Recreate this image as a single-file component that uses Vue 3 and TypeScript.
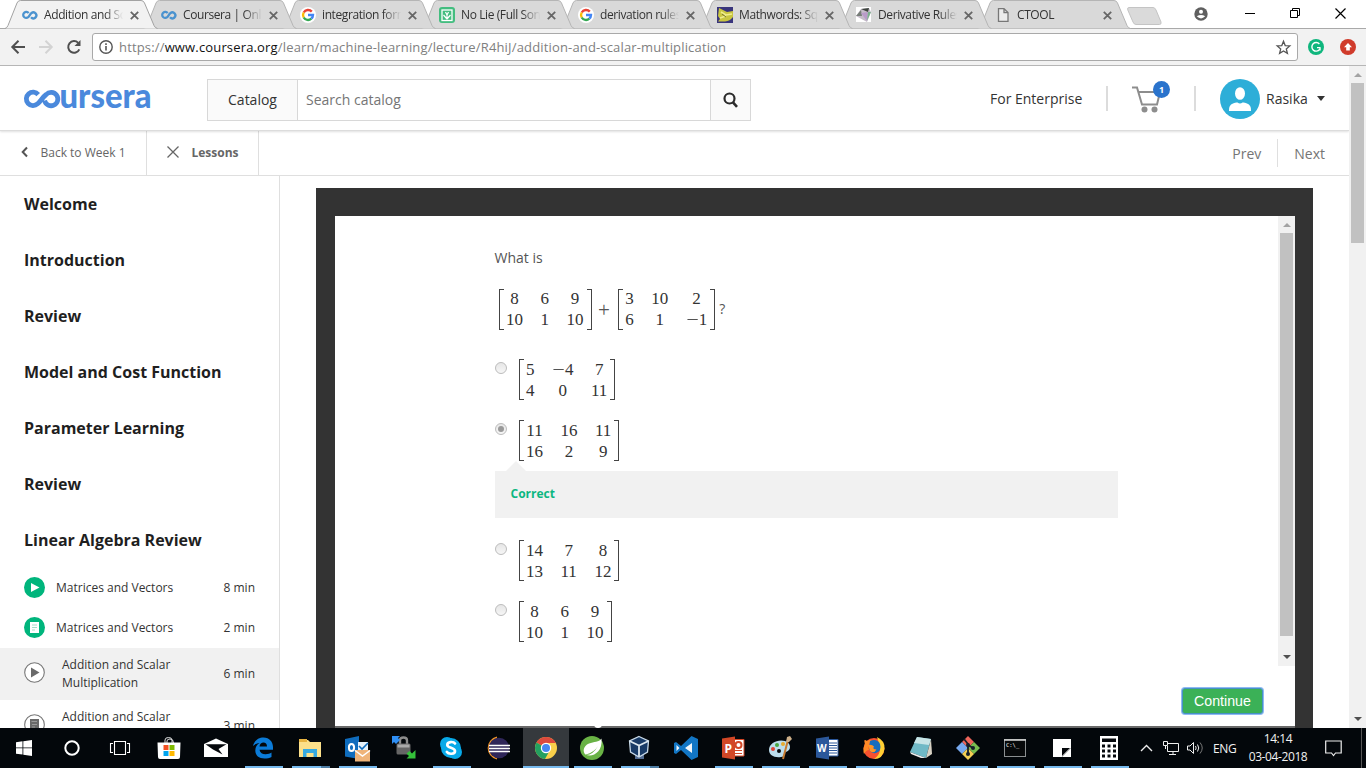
<script setup lang="ts">
interface Tab { title: string; icon: string }
interface Option { rows: string[][]; checked?: boolean; correct?: boolean }
interface Lesson { title: string; time: string; icon: string; active?: boolean; tall?: boolean }
interface App { name: string; state?: string }

const tabs: Tab[] = [
  { title: 'Addition and Scalar', icon: 'coursera' },
  { title: 'Coursera | Online', icon: 'coursera' },
  { title: 'integration formula', icon: 'google' },
  { title: 'No Lie (Full Song)', icon: 'saavn' },
  { title: 'derivation rules', icon: 'google' },
  { title: 'Mathwords: Square', icon: 'mathwords' },
  { title: 'Derivative Rules', icon: 'derivative' },
  { title: 'CTOOL', icon: 'file' },
]

const sections: string[] = [
  'Welcome', 'Introduction', 'Review', 'Model and Cost Function',
  'Parameter Learning', 'Review', 'Linear Algebra Review',
]

const lessons: Lesson[] = [
  { title: 'Matrices and Vectors', time: '8 min', icon: 'play' },
  { title: 'Matrices and Vectors', time: '2 min', icon: 'doc' },
  { title: 'Addition and Scalar Multiplication', time: '6 min', icon: 'play-outline', active: true, tall: true },
  { title: 'Addition and Scalar Multiplication', time: '3 min', icon: 'doc-outline', tall: true },
]

const left: string[][] = [['8', '6', '9'], ['10', '1', '10']]
const right: string[][] = [['3', '10', '2'], ['6', '1', '−1']]

const options: Option[] = [
  { rows: [['5', '−4', '7'], ['4', '0', '11']] },
  { rows: [['11', '16', '11'], ['16', '2', '9']], checked: true, correct: true },
  { rows: [['14', '7', '8'], ['13', '11', '12']] },
  { rows: [['8', '6', '9'], ['10', '1', '10']] },
]

const apps: App[] = [
  { name: 'store' }, { name: 'mail' }, { name: 'edge', state: 'open' }, { name: 'explorer', state: 'multi' },
  { name: 'outlook', state: 'open' }, { name: 'lock' }, { name: 'skype', state: 'open' }, { name: 'eclipse' },
  { name: 'chrome', state: 'open focus' }, { name: 'spring', state: 'open' }, { name: 'vbox', state: 'multi' },
  { name: 'vscode' }, { name: 'powerpoint', state: 'open' }, { name: 'paint', state: 'open' },
  { name: 'word', state: 'open' }, { name: 'firefox', state: 'open' }, { name: 'notepad', state: 'open' },
  { name: 'git', state: 'open' }, { name: 'cmd', state: 'open' }, { name: 'notes', state: 'open' },
  { name: 'calc', state: 'open' },
]
</script>

<template>
  <div class="screen">
    <div class="strip">
      <div v-for="(t, i) in tabs" :key="i" class="tab" :class="{ on: i === 0 }" :style="{ zIndex: 10 - i }">
        <svg class="shape" width="153" height="29" viewBox="0 0 153 29">
          <path d="M0 28.5 Q2 28 3 25.5 L12 3 Q13 .5 15.500 .5 H136 Q138.500 .5 139.500 3 L149 25.500 Q150 28 152.500 28.500" />
        </svg>
        <svg class="fav" width="16" height="16" viewBox="0 0 16 16">
          <g v-if="t.icon === 'coursera'" fill="none" stroke="#4b93cf" stroke-width="2.300">
            <path d="M6.600 6.100 A3 3 0 1 0 6.200 10.200 C7.500 9 8 7 9.500 6 A3 3 0 1 1 9 10.300" />
          </g>
          <g v-else-if="t.icon === 'google'">
            <circle cx="8" cy="8" r="8" fill="#fff" />
            <g fill="none" stroke-width="2.400">
              <path d="M11.800 4.600 A5 5 0 0 0 3.700 5.500" stroke="#ea4335" />
              <path d="M3.700 5.500 A5 5 0 0 0 3.700 10.500" stroke="#fbbc05" />
              <path d="M3.700 10.500 A5 5 0 0 0 11.300 11.700" stroke="#34a853" />
              <path d="M11.300 11.700 A5 5 0 0 0 13 8 H8" stroke="#4285f4" />
            </g>
          </g>
          <g v-else-if="t.icon === 'saavn'">
            <rect width="16" height="16" rx="3" fill="#43bd7f" />
            <rect x="3" y="3" width="10" height="10.500" fill="none" stroke="#fff" stroke-width="1.300" />
            <path d="M8 12 V8 M8 12 L4.500 8 M8 12 L11.500 8 M6.500 5 L8 8 L9.500 5" fill="none" stroke="#fff" stroke-width="1.200" />
          </g>
          <g v-else-if="t.icon === 'mathwords'">
            <rect width="16" height="16" fill="#39357c" />
            <path d="M2 1 L6 3 L10 5 L16 4 V10 Q13 14 8 14.500 L1 14.500 L3 12 L1 9Z" fill="#c9c640" />
            <path d="M4 5 L9 8 L15 7 M3 11 L9 9" stroke="#f0ee8e" stroke-width="1.500" fill="none" />
            <path d="M5 7 L9 10" stroke="#77752b" />
          </g>
          <g v-else-if="t.icon === 'derivative'">
            <rect width="15" height="15" fill="#fff" />
            <path d="M0 9 L5 2 L13 1 L15 5 L11 15Z" fill="#c5bcc9" />
            <path d="M5 2 L13 1 L12 5 Z" fill="#3e453f" />
            <path d="M0 9 L5 3 L6 9Z" fill="#777e78" />
            <path d="M5 6 L12 5 L11 14Z" fill="#b99bc9" />
            <path d="M12 5 L15 5 L11 14Z" fill="#79b28b" />
          </g>
          <g v-else fill="#ececec" stroke="#777" stroke-width="1.300">
            <path d="M3.500 1.600 H9 L13 5.600 V14.400 H3.500Z M9 1.600 V5.600 H13" />
          </g>
        </svg>
        <span class="title" :class="{ full: t.title === 'CTOOL' }">{{ t.title }}</span>
        <svg class="x" width="9" height="9" viewBox="0 0 9 9"><path d="M.8 .8 L8.200 8.200 M8.200 .8 L.8 8.200" /></svg>
      </div>
      <svg class="newtab" width="35" height="18" viewBox="0 0 35 18">
        <path d="M2 .5 H26 Q28 .5 29 3 L34 15 Q34.500 17.500 32.500 17.500 H9 Q7 17.500 6 15 L.8 3 Q0 .5 2 .5Z" fill="#dadada" stroke="#c4c4c4" />
      </svg>
      <div class="winbtns">
        <svg width="14" height="14" viewBox="0 0 14 14">
          <circle cx="7" cy="7" r="6.700" fill="#5f5f5f" /><circle cx="7" cy="4.700" r="2" fill="#fff" />
          <path d="M2.800 9.300 Q7 6.600 11.200 9.300 Q7 13.500 2.800 9.300" fill="#fff" />
        </svg>
        <svg width="11" height="11" viewBox="0 0 11 11"><path d="M0 5.500 H10" stroke="#000" /></svg>
        <svg width="11" height="11" viewBox="0 0 11 11" fill="none" stroke="#000"><path d="M.5 2.500 H7.500 V9.500 H.5Z M2.500 2.500 V.5 H9.500 V7.500 H7.500" /></svg>
        <svg width="11" height="11" viewBox="0 0 11 11"><path d="M.5 .5 L10.500 10.500 M10.500 .5 L.5 10.500" stroke="#000" stroke-width="1.200" /></svg>
      </div>
    </div>

    <div class="toolbar">
      <svg class="nav" width="16" height="16" viewBox="0 0 16 16"><path d="M15 8 H2.500 M8.500 1.800 L2.300 8 L8.500 14.200" stroke="#4f4f4f" /></svg>
      <svg class="nav" width="16" height="16" viewBox="0 0 16 16"><path d="M1 8 H13.500 M7.500 1.800 L13.700 8 L7.500 14.200" stroke="#d3d3d3" /></svg>
      <svg class="nav" width="16" height="16" viewBox="0 0 16 16"><path d="M13.300 10.300 A5.800 5.800 0 1 1 12.200 3.900" stroke="#4f4f4f" /><path d="M14.500 1 V7 H8.500Z" fill="#4f4f4f" stroke="none" /></svg>
      <div class="omni">
        <svg width="14" height="14" viewBox="0 0 14 14"><circle cx="7" cy="7" r="6.200" fill="none" stroke="#555" stroke-width="1.400" /><path d="M7 6 V10.500 M7 3.300 V5" stroke="#555" stroke-width="1.600" /></svg>
        <span class="url">https://<b>www.coursera.org</b>/learn/machine-learning/lecture/R4hiJ/addition-and-scalar-multiplication</span>
        <svg class="star" width="15" height="15" viewBox="0 0 15 15"><path d="M7.500 1.300 L9.200 5.600 L13.800 5.900 L10.300 8.900 L11.400 13.400 L7.500 10.900 L3.600 13.400 L4.700 8.900 L1.200 5.900 L5.800 5.600Z" fill="none" stroke="#555" stroke-width="1.300" /></svg>
      </div>
      <svg class="ext" width="16" height="16" viewBox="0 0 16 16"><circle cx="8" cy="8" r="8" fill="#0fb67d" /><path d="M11.400 5 A4.300 4.300 0 1 0 11.600 10.500 M12 8.500 V11.500 M12.500 8.600 H9" fill="none" stroke="#fff" stroke-width="1.400" /></svg>
      <svg class="ext" width="16" height="16" viewBox="0 0 16 16"><circle cx="8" cy="8" r="8" fill="#d03b2b" /><path d="M8 4 L12 8.300 H9.800 V11.500 H6.200 V8.300 H4Z" fill="#fff" /></svg>
    </div>

    <div class="view">
      <div class="page">
        <header class="head">
          <svg class="logo" width="129" height="32" viewBox="0 0 129 32" role="img" aria-label="coursera">
            <path d="M15.200 11.600 A6.700 6.700 0 1 0 14.600 20.800 C18 17.800 19.200 14.500 23.200 11.500 A6.700 6.700 0 1 1 21.600 17.500" fill="none" stroke="#4a89dc" stroke-width="4.800" />
            <text x="36.500" y="25.300" textLength="92" lengthAdjust="spacingAndGlyphs" class="logotext">ursera</text>
          </svg>
          <div class="search">
            <span class="catalog">Catalog</span>
            <span class="field">Search catalog</span>
            <span class="go"><svg width="15" height="16" viewBox="0 0 15 16"><circle cx="6.500" cy="6.500" r="5" fill="none" stroke="#2b2b2b" stroke-width="2.200" /><path d="M10 10.300 L14 14.800" stroke="#2b2b2b" stroke-width="2.600" /></svg></span>
          </div>
          <span class="ent">For Enterprise</span>
          <i class="bar"></i>
          <div class="cart">
            <svg width="30" height="27" viewBox="0 0 30 27">
              <path d="M0 1.500 H5 L10 18.500 H25 L28 6 H7" fill="none" stroke="#8d8d8d" stroke-width="2" />
              <circle cx="12.500" cy="23.500" r="3" fill="#8d8d8d" /><circle cx="22.500" cy="23.500" r="3" fill="#8d8d8d" />
            </svg>
            <span class="badge">1</span>
          </div>
          <i class="bar second"></i>
          <svg class="avatar" width="40" height="40" viewBox="0 0 40 40">
            <circle cx="20" cy="20" r="20" fill="#2daed8" /><ellipse cx="20" cy="14.500" rx="5" ry="6.300" fill="#fff" />
            <path d="M9 32 Q8.500 26 13 24.500 Q16 23 17.500 23.500 Q20 25.500 22.500 23.500 Q24 23 27 24.500 Q31.500 26 31 32Z" fill="#fff" />
          </svg>
          <span class="user">Rasika</span>
          <i class="caret"></i>
        </header>

        <nav class="sub">
          <span class="back"><svg width="7" height="12" viewBox="0 0 7 12"><path d="M6 1.500 L1.700 6 L6 10.500" fill="none" stroke="#555" stroke-width="2" /></svg><em>Back to Week 1</em></span>
          <span class="lessons"><svg width="12" height="12" viewBox="0 0 12 12"><path d="M.5 .5 L11.500 11.500 M11.500 .5 L.5 11.500" stroke="#666" stroke-width="1.300" /></svg><strong>Lessons</strong></span>
          <span class="prev">Prev</span><i class="split"></i><span class="next">Next</span>
        </nav>

        <div class="body">
          <aside class="side">
            <h3 v-for="(s, i) in sections" :key="i">{{ s }}</h3>
            <div v-for="(l, i) in lessons" :key="'l' + i" class="lesson" :class="{ active: l.active, tall: l.tall }">
              <svg width="21" height="21" viewBox="0 0 21 21">
                <circle v-if="l.icon === 'play' || l.icon === 'doc'" cx="10.500" cy="10.500" r="10.500" fill="#00b57c" />
                <circle v-else cx="10.500" cy="10.500" r="9.800" fill="#fff" stroke="#777" stroke-width="1.100" />
                <path v-if="l.icon === 'play'" d="M7 6 L15.500 10.500 L7 15Z" fill="#fff" />
                <path v-if="l.icon === 'play-outline'" d="M7 5.500 L15.500 10.500 L7 15.500Z" fill="#6a6a6a" />
                <g v-if="l.icon === 'doc'"><rect x="6" y="5" width="9" height="11" fill="#fff" /><path d="M8 8 H13 M8 10.500 H13 M8 13 H11" stroke="#a5dfc9" /></g>
                <g v-if="l.icon === 'doc-outline'"><rect x="6" y="5" width="9" height="11" fill="#6a6a6a" /><path d="M7.500 7.500 H13 M8 10.500 H13 M8 13 H11" stroke="#999" /></g>
              </svg>
              <span class="name">{{ l.title }}</span><span class="time">{{ l.time }}</span>
            </div>
          </aside>

          <main class="stage">
            <div class="frame">
              <div class="sheet">
                <div class="scroller">
                  <div class="quiz">
                    <p class="ask">What is</p>
                    <div class="sum">
                      <table class="mx"><tr v-for="(r, i) in left" :key="i"><td v-for="(c, j) in r" :key="j">{{ c }}</td></tr></table>
                      <span class="plus">+</span>
                      <table class="mx"><tr v-for="(r, i) in right" :key="i"><td v-for="(c, j) in r" :key="j"><span v-if="c[0] === '−'" class="minus">−</span>{{ c.replace('−', '') }}</td></tr></table>
                      <span class="q">?</span>
                    </div>
                    <div v-for="(o, k) in options" :key="k" class="opt" :class="{ answered: o.correct }">
                      <div class="choice">
                        <i class="radio" :class="{ checked: o.checked }"></i>
                        <table class="mx"><tr v-for="(r, i) in o.rows" :key="i"><td v-for="(c, j) in r" :key="j"><span v-if="c[0] === '−'" class="minus">−</span>{{ c.replace('−', '') }}</td></tr></table>
                      </div>
                      <div v-if="o.correct" class="feedback">Correct</div>
                    </div>
                  </div>
                  <div class="sb inner"><i class="up"></i><i class="thumb"></i><i class="down"></i></div>
                </div>
                <div class="actions"><button class="cont">Continue</button></div>
                <div class="seek"><i class="knob"></i></div>
              </div>
            </div>
          </main>
        </div>
      </div>
      <div class="sb outer"><i class="up"></i><i class="thumb"></i><i class="down"></i></div>
    </div>

    <footer class="task">
      <span class="sys"><svg width="16" height="16" viewBox="0 0 16 16" fill="#fff"><path d="M0 2.200 L6.500 1.300 V7.500 H0Z M7.300 1.200 L16 0 V7.500 H7.300Z M0 8.300 H6.500 V14.600 L0 13.700Z M7.300 8.300 H16 V16 L7.300 14.800Z" /></svg></span>
      <span class="sys"><svg width="16" height="16" viewBox="0 0 16 16"><circle cx="8" cy="8" r="6.700" fill="none" stroke="#fff" stroke-width="2" /></svg></span>
      <span class="sys"><svg width="20" height="16" viewBox="0 0 20 16" fill="none" stroke="#fff"><path d="M4.500 1.500 H15.500 V14.500 H4.500Z M3 3.500 H.5 V12.500 H3 M17 3.500 H19.500 V12.500 H17" stroke-width="1.100" /></svg></span>
      <div class="apps">
        <span v-for="a in apps" :key="a.name" class="app" :class="a.state">
          <svg width="24" height="24" viewBox="0 0 24 24">
            <g v-if="a.name === 'store'"><path d="M8 7 V4 Q8 1.500 11.500 1.500 Q15 1.500 15 4 V7 M10 7 V5 Q10 3 13 3 Q16.500 3 16.500 7" fill="none" stroke="#ddd" /><path d="M.5 6.500 H23.500 L23 21 Q23 23 21 23 H3 Q1 23 1 21Z" fill="#fff" /><path d="M6.500 9 H11.500 V14 H6.500Z" fill="#f25022" /><path d="M12.500 9 H17.500 V14 H12.500Z" fill="#7fba00" /><path d="M6.500 15 H11.500 V20 H6.500Z" fill="#00a4ef" /><path d="M12.500 15 H17.500 V20 H12.500Z" fill="#ffb900" /></g>
            <g v-else-if="a.name === 'mail'"><path d="M0 8 L12 2.500 L24 8 V21 H0Z" fill="#fff" /><path d="M1.500 8.300 L22.500 8.300 L14.500 13 L18.500 18.500 L9 13.500Z" fill="#05080c" /></g>
            <g v-else-if="a.name === 'edge'"><path d="M2 10 C3.500 4 8 1.500 12.500 1.500 C18.500 1.500 22 6 22 11 V13.800 H8.500 C9 17 11.500 18.300 14.500 18.300 C17 18.300 19 17.600 20.500 16.600 V21 C18.500 22 16 22.500 13.500 22.500 C8 22.500 4.300 19.500 4.300 14.500 C4.300 11 6 8.500 8.500 7 C6 7 3.500 8.500 2 10Z M8.500 10.500 H16 C16 8 14.500 6.500 12.500 6.500 C10.500 6.500 8.800 8 8.500 10.500Z" fill="#0b7bd8" fill-rule="evenodd" /></g>
            <g v-else-if="a.name === 'explorer'"><path d="M1 4 H10 L12 6 H23 V21 H1Z" fill="#fce08a" /><path d="M1 3 H9 V6 H1Z" fill="#e8b441" /><path d="M5 13 H19 V21 H15.500 V17 H8.500 V21 H5Z" fill="#36a9e1" /></g>
            <g v-else-if="a.name === 'outlook'"><path d="M0 3 L14 0 V23 L0 20.500Z" fill="#0f6cbd" /><path d="M13 6 H23 V17 H13Z" fill="#e6f2fb" /><path d="M14 10 L17 13 L23 7" fill="none" stroke="#0f6cbd" stroke-width="1.600" /><ellipse cx="6.500" cy="11.500" rx="2.600" ry="3.500" fill="none" stroke="#fff" stroke-width="2" /><path d="M10 14 H25 V25.500 H10Z" fill="#efb479" /><path d="M10 14.500 L17.500 20 L25 14.500" fill="none" stroke="#fff" stroke-width="1.500" /></g>
            <g v-else-if="a.name === 'lock'"><path d="M8 9 V4.500 Q8 1.500 11.500 1.500 Q15 1.500 15 4.500 V9" fill="none" stroke="#8c8c8c" stroke-width="2.400" /><rect x="4.500" y="7.500" width="14" height="11" rx="1.500" fill="#666" /><path d="M5.500 8.500 H17.500 V11.500 H5.500Z" fill="#aaa" /><path d="M0 0 H8 L6 2 L8 4 L4 8 L2 6 L0 8Z" fill="#2f8ff5" /><path d="M23.500 22.500 H14.500 L17 20 L14.500 17.500 L17.500 15 L20 17.500 L23.500 14Z" fill="#35c13a" /></g>
            <g v-else-if="a.name === 'skype'"><circle cx="8" cy="8" r="7" fill="#08a9e8" /><circle cx="16" cy="16" r="7" fill="#08a9e8" /><circle cx="12" cy="12" r="10" fill="#08a9e8" /><path d="M16 7.500 C14.500 5.300 8.300 5.300 8.300 9 C8.300 12.300 16 11.300 16 15 C16 18.500 9.500 18.500 7.900 16" fill="none" stroke="#fff" stroke-width="2.700" stroke-linecap="round" /></g>
            <g v-else-if="a.name === 'eclipse'"><path d="M11 1.300 A11 11 0 0 0 11 22.700" fill="none" stroke="#f09428" stroke-width="1.800" /><circle cx="13" cy="12" r="10.300" fill="#2f2659" /><path d="M3 9.500 H24 M3 12.500 H24 M3 15.500 H24" stroke="#fff" stroke-width="1.300" /></g>
            <g v-else-if="a.name === 'chrome'"><circle cx="12" cy="12" r="11" fill="#f9cf4a" /><path d="M12 12 L2.470 6.500 A11 11 0 0 1 21.530 6.500 L12 7Z" fill="#dc4a3d" /><path d="M11 7 H21.700 L21.300 6 L12 5Z" fill="#dc4a3d" /><path d="M12 12 L2.470 6.500 A11 11 0 0 0 11 22.950 L16 14Z" fill="#23a060" /><circle cx="12" cy="12" r="5.200" fill="#fff" /><circle cx="12" cy="12" r="4" fill="#4688f1" /></g>
            <g v-else-if="a.name === 'spring'"><circle cx="12" cy="12" r="12" fill="#69b245" /><path d="M21.500 2.500 C19 6.500 14 5.500 9 7.500 C3 10 2.500 16 5.500 18.500 C12 21.500 23 17 21.500 2.500Z" fill="#fff" /><path d="M6 18.500 Q14 16.500 18 10 Q13 19 6 19Z" fill="#69b245" /></g>
            <g v-else-if="a.name === 'vbox'"><path d="M8 18 H17 V23 H8Z" fill="#526b91" /><path d="M12 .5 L21.500 5 L20.500 16 L12 21 L3.500 16 L2.500 5Z" fill="#183a66" stroke="#c8d9e8" stroke-width="1.300" /><path d="M2.500 5 L12 9.500 L21.500 5 M12 9.500 V20.500" fill="none" stroke="#dce7ef" stroke-width="1.800" /></g>
            <g v-else-if="a.name === 'vscode'"><path d="M17.500 0 L24 3 V21 L17.500 24 L7 14 L2 18 L0 17 V7 L2 6 L7 10Z" fill="#1276c5" /><path d="M18 7 L11 12 L18 17Z M2.500 9 V15 L5.500 12Z" fill="#f2f7fb" /></g>
            <g v-else-if="a.name === 'powerpoint'"><path d="M12 3.500 H23 V20 H12Z" fill="#fff" stroke="#d24726" /><circle cx="17.500" cy="9" r="3" fill="none" stroke="#d24726" stroke-width="2" /><path d="M14 14.500 H21 M14 17.500 H21" stroke="#d24726" /><path d="M1 2.500 L14 .5 V23.500 L1 21.500Z" fill="#d24726" /><text x="3.500" y="16.500" class="mono">P</text></g>
            <g v-else-if="a.name === 'paint'"><path d="M1 14 C1 7 10 3 17 5 C23 7 24 14 18 16 C14 17 18 21 13 21 C6 22 1 19 1 14Z" fill="#bcddec" /><circle cx="5" cy="13" r="2" fill="#df4335" /><circle cx="9" cy="9" r="2" fill="#4aa742" /><circle cx="15" cy="8" r="2" fill="#e7ab2f" /><circle cx="11" cy="15" r="2" fill="#05080c" /><path d="M20 4 L15 23" stroke="#c57a31" stroke-width="2" /><path d="M18 6 L19 1 L22 0 L24 3 L21 6Z" fill="#ceb08a" /></g>
            <g v-else-if="a.name === 'word'"><path d="M12 3.500 H23 V20 H12Z" fill="#fff" stroke="#2b579a" /><path d="M14 7 H22 M14 9.500 H22 M14 12 H22 M14 14.500 H22 M14 17 H22" stroke="#2b579a" /><path d="M1 2.500 L14 .5 V23.500 L1 21.500Z" fill="#2b579a" /><text x="2" y="16" class="mono w">W</text></g>
            <g v-else-if="a.name === 'firefox'"><circle cx="12" cy="12.500" r="10.500" fill="#f7502f" /><path d="M15 1 Q23.500 5 22.500 13 Q21 23 12 23 Q17 20 18 14 Q18 8 15 1Z" fill="#ffcf33" /><path d="M3 8 Q1 2 5 5 Q8 3 10 5 Q5 9 7 14 Q4 14 2 18 Q.5 13 3 8Z" fill="#ff8a26" /><path d="M8 5 Q15 2 18 8 Q20 15 14 17 Q8 18 7 12 Z" fill="#176dbd" /><path d="M6 9 Q10 8 12 10.500 Q10 13.500 14.500 13.500 Q12 18 8 15Z" fill="#ff9526" /></g>
            <g v-else-if="a.name === 'notepad'"><path d="M8 1 L22 3 L17 22 L1 16Z" fill="#70b9c6" /><path d="M8 1 L22 3 L20 9 L5 7Z" fill="#c7e4e6" /><path d="M22 3 L23 18 L17 22Z" fill="#d8d2c4" /><path d="M1 16 L17 22 L12 22 L2 18Z" fill="#eee" /></g>
            <g v-else-if="a.name === 'git'"><path d="M12 0 L18 6 L12 12 L6 6Z" fill="#ef655a" /><path d="M6 6 L12 12 L6 18 L0 12Z" fill="#77a9ef" /><path d="M18 6 L24 12 L18 18 L12 12Z" fill="#78bd4f" /><path d="M12 12 L18 18 L12 24 L6 18Z" fill="#f4cf54" /><path d="M8 3 L12 8 V18 M12 9 L17 12" fill="none" stroke="#16202a" stroke-width="1.800" /><circle cx="12" cy="18" r="2" fill="#16202a" /><circle cx="17" cy="12" r="2" fill="#16202a" /><circle cx="12" cy="9" r="2" fill="#16202a" /></g>
            <g v-else-if="a.name === 'cmd'"><rect x="1.500" y="3.500" width="21" height="17" fill="#07090b" stroke="#8b8f91" /><path d="M1 4 H23" stroke="#d0d0d0" stroke-width="1.600" /><text x="3" y="11" class="tiny">C:\_</text></g>
            <g v-else-if="a.name === 'notes'"><path d="M3 3 H21 V12 L12 21 H3Z" fill="#fff" /><path d="M21 12 V21 H12Z" fill="#fff" /><path d="M12 12 H20 L12 20Z" fill="#05080c" /></g>
            <g v-else><rect x="3" y="0" width="18" height="24" fill="#fff" /><path d="M5 2.500 H19 V6 H5Z" fill="#05080c" /><path d="M5 10 H19 M5 15 H19 M5 20 H19" stroke="#05080c" stroke-width="2.800" stroke-dasharray="3 2.500" /></g>
          </svg>
        </span>
      </div>
      <div class="tray">
        <svg width="13" height="8" viewBox="0 0 13 8"><path d="M1 7 L6.500 1.500 L12 7" fill="none" stroke="#eee" stroke-width="1.400" /></svg>
        <svg width="17" height="14" viewBox="0 0 17 14" fill="none" stroke="#eee"><path d="M5 2.500 H15.500 V10.500 H4.500 V5 M10 10.500 V13 M6 13.500 H13 M.5 .5 H4.500 V4.500 H.5Z M2.500 4.500 V8" /></svg>
        <svg width="17" height="14" viewBox="0 0 17 14" fill="none" stroke="#eee"><path d="M.5 5 H3 L6.500 1.500 V12.500 L3 9 H.5Z M8.500 5 Q9.800 7 8.500 9 M10.500 3.500 Q13 7 10.500 10.500" /><path d="M13 1.500 Q17.500 7 13 12.500" stroke="#777" /></svg>
        <span class="eng">ENG</span>
        <span class="clock"><span>14:14</span><span class="date">03-04-2018</span></span>
        <svg width="17" height="17" viewBox="0 0 17 17" fill="none" stroke="#eee" stroke-width="1.200"><path d="M.7 1 H16.200 V13 H10.500 L8.500 15.500 L6.500 13 H.7Z" /></svg>
        <i class="peek"></i>
      </div>
    </footer>
  </div>
</template>

<style>
html, body { overflow: hidden; }
</style>

<style scoped>
.screen { width: 1366px; height: 768px; display: flex; flex-direction: column; overflow: hidden; background: #fff; font-family: "Open Sans", "Noto Sans", sans-serif; color: #333; }
.screen * { box-sizing: border-box; }
svg { display: block; flex: none; overflow: visible; }
i, em { font-style: normal; }

.strip { height: 29px; flex: none; display: flex; padding-left: 5px; border-bottom: 1px solid #a9a9a9; background: #fff; }
.tab { position: relative; isolation: isolate; width: 152px; height: 29px; margin-right: -13px; flex: none; display: flex; align-items: center; padding: 1px 0 0 17px; }
.shape { position: absolute; left: 0; top: 0; z-index: -1; }
.tab .shape path { fill: #d9d9d9; stroke: #b5b5b5; }
.tab.on .shape path { fill: #f2f2f2; stroke: #a2a2a2; }
.title { width: 80px; margin-left: 6px; font: 12px/20px "Open Sans", sans-serif; letter-spacing: -.4px; color: #333; white-space: nowrap; overflow: hidden; -webkit-mask-image: linear-gradient(90deg, #000 76%, transparent 99%); mask-image: linear-gradient(90deg, #000 76%, transparent 99%); }
.title.full { letter-spacing: -.4px; }
.x { margin-left: 6px; }
.x path { stroke: #666; stroke-width: 1.8; }
.newtab { margin: 7px 0 0 10px; }
.winbtns { margin-left: 32px; height: 27px; display: flex; align-items: center; }
.winbtns svg:nth-child(2) { margin-left: 37px; }
.winbtns svg:nth-child(3), .winbtns svg:nth-child(4) { margin-left: 34px; }

.toolbar { height: 37px; flex: none; display: flex; align-items: center; background: #f2f2f2; border-bottom: 1px solid #b6b6b6; padding-left: 10px; }
.nav { margin-right: 12px; fill: none; stroke-width: 2; }
.omni { width: 1206px; height: 28px; margin-left: -2px; border: 1px solid #a9a9a9; border-radius: 3px; background: #fff; display: flex; align-items: center; padding: 0 6px; }
.url { margin-left: 6px; font-size: 13px; line-height: 20px; letter-spacing: .16px; color: #808080; white-space: nowrap; }
.url b { font-weight: 400; color: #111; }
.star { margin-left: auto; }
.ext { margin-left: 10px; }
.ext + .ext { margin-left: 16px; }

.view { height: 662px; flex: none; display: flex; }
.page { width: 1349px; height: 662px; overflow: hidden; }
.head { height: 65px; display: flex; align-items: center; padding-left: 23px; border-bottom: 1px solid #dcdcdc; box-shadow: 0 1px 2px rgba(0,0,0,.12); position: relative; }
.logo { margin-top: 1px; }
.logotext { font: 900 35px Lato, sans-serif; fill: #4a89dc; }
.search { width: 544px; height: 42px; margin: 3px 0 0 55px; border: 1px solid #d8d8d8; display: flex; line-height: 40px; font-size: 14px; }
.catalog { width: 90px; background: #fafafa; border-right: 1px solid #d8d8d8; text-align: center; }
.field { flex: 1; padding-left: 8px; color: #757575; }
.go { width: 40px; border-left: 1px solid #d8d8d8; background: #fafafa; display: flex; align-items: center; justify-content: center; }
.ent { margin: 1px 0 0 239px; width: 92px; font-size: 14px; white-space: nowrap; }
.bar { width: 2px; height: 25px; background: #dcdcdc; margin-left: 24px; }
.cart { position: relative; margin: 3px 0 0 24px; width: 30px; }
.badge { position: absolute; left: 21px; top: -5px; width: 17px; height: 17px; border-radius: 50%; background: #2a73cc; color: #fff; font: 700 9px/17px "Open Sans", sans-serif; text-align: center; }
.bar.second { margin-left: 32px; }
.avatar { margin: 1px 0 0 24px; }
.user { margin-left: 6px; font-size: 14px; }
.caret { margin-left: 9px; border: 4px solid transparent; border-top: 5px solid #333; border-bottom: 0; }

.sub { height: 45px; border-bottom: 1px solid #dfdfdf; display: flex; align-items: center; font-size: 12px; color: #666; padding-right: 24px; }
.back { width: 147px; height: 44px; border-right: 1px solid #dfdfdf; display: flex; align-items: center; padding: 0 0 2px 21px; }
.back em { margin-left: 12.500px; white-space: nowrap; }
.lessons { width: 112px; height: 44px; border-right: 1px solid #dfdfdf; display: flex; align-items: center; padding: 0 0 2px 20px; }
.lessons strong { margin-left: 12.500px; }
.prev { margin-left: auto; font-size: 14px; color: #757575; }
.next { font-size: 14px; color: #757575; }
.split { width: 1px; height: 28px; margin: 0 16.500px 0 15.500px; background: #dfdfdf; }

.body { height: 552px; display: flex; overflow: hidden; }
.side { width: 280px; border-right: 1px solid #dfdfdf; flex: none; }
.side h3 { margin: 0; height: 56px; padding: 17px 0 0 24px; font-size: 16px; line-height: 22px; font-weight: 700; color: #1f1f1f; }
.lesson { height: 40px; display: flex; align-items: center; padding: 0 24px; font-size: 12px; line-height: 18px; color: #333; }
.lesson.tall { height: 52px; }
.lesson.active { background: #f1f1f1; }
.name { margin-left: 11px; width: 130px; }
.tall .name { margin-left: 17px; }
.time { margin-left: auto; }
.lesson svg { margin-top: -1px; }
.tall svg { margin-top: -3px; }

.stage { padding: 12px 0 0 36px; }
.frame { width: 997px; height: 540px; background: #333; padding: 28px 18px 0 19px; }
.sheet { height: 512px; background: #fff; display: flex; flex-direction: column; }
.scroller { height: 450px; display: flex; justify-content: space-between; }
.quiz { margin-left: 160px; width: 623px; }
.ask { margin: 32px 0 21px -.5px; font-size: 14px; line-height: 20px; color: #555; }
.sum { display: flex; align-items: center; height: 42px; padding-left: 4px; margin-bottom: 27px; }
.mx { position: relative; border-collapse: separate; border-spacing: 0; height: 42px; margin: 0; font: 17px/21px "Liberation Serif", serif; color: #333; }
.mx::before, .mx::after { content: ''; box-sizing: border-box; position: absolute; top: 0; width: 5px; height: 41px; border: 1px solid #444; }
.mx::before { left: 0; border-right: 0; }
.mx::after { right: 0; border-left: 0; }
.mx td { padding: 0 8.750px 1px; text-align: center; line-height: 20px; height: 21px; }
.choice .mx td { padding-bottom: 0; line-height: 21px; }
.mx td:first-child { padding-left: 7px; }
.mx td:last-child { padding-right: 8px; }
.minus { display: inline-block; width: 13px; transform: scaleX(1.3); text-align: center; }
.plus { font: 21px/30px "Liberation Serif", serif; margin: 0 8.500px 0 6.500px; color: #555; }
.q { font-size: 14px; color: #555; margin: -3px 0 0 4px; }
.opt { height: 61px; }
.opt.answered { height: 120px; }
.choice { display: flex; height: 52px; align-items: flex-start; }
.choice .mx { margin-top: 1px; }
.radio { width: 12px; height: 12px; margin: 4px 12px 0 0; border: 1px solid #bcbcbc; border-radius: 50%; background: linear-gradient(#e6e6e6, #f6f6f6); display: flex; align-items: center; justify-content: center; }
.radio.checked::after { content: ''; width: 6px; height: 6px; border-radius: 50%; background: #999; }
.feedback { position: relative; height: 47px; background: #f1f1f1; padding-left: 15.500px; line-height: 46px; font-size: 12px; font-weight: 700; color: #0cb781; }
.feedback::before { content: ''; position: absolute; left: 11px; top: -10px; border: 10px solid transparent; border-top: 0; border-bottom-color: #f1f1f1; }
.actions { height: 60px; padding: 22px 32px 0 0; display: flex; justify-content: flex-end; align-items: flex-start; }
.cont { width: 81px; height: 26px; border: 1px solid #4791c5; border-radius: 3px; background: #3bb157; box-shadow: 0 0 0 1px #8db9f2; color: #fff; font: 14.200px "Liberation Sans", sans-serif; padding: 0; }
.seek { position: relative; height: 2px; background: #696969; }
.knob { position: absolute; left: 259px; top: -3px; width: 8px; height: 5px; border-radius: 0 0 5px 5px; background: #fff; }

.sb { width: 17px; background: #f1f1f1; display: flex; flex-direction: column; align-items: center; flex: none; }
.sb .up { margin-top: 7px; border: 4px solid transparent; border-bottom: 4px solid #a3a3a3; border-top: 0; }
.sb .down { margin: auto 0 7px; border: 4px solid transparent; border-top: 4px solid #505050; border-bottom: 0; }
.sb .thumb { width: 13px; margin-top: 6px; background: #c1c1c1; }
.outer .thumb { height: 160px; }
.inner .thumb { height: 403px; }

.task { height: 40px; flex: none; background: #03070b; display: flex; color: #f2f2f2; }
.sys { width: 48px; flex: none; display: flex; align-items: center; justify-content: center; }
.apps { margin-left: 2px; display: flex; flex: none; }
.app { position: relative; width: 47px; padding-right: 1px; display: flex; align-items: center; justify-content: center; }
.app.open::after, .app.multi::after { content: ''; position: absolute; bottom: 0; left: 5px; width: 38px; height: 2px; background: #76b9ed; }
.app.multi::after { background: linear-gradient(90deg, #76b9ed 29px, #4d7ca3 29px); }
.app.focus { width: 46px; margin-left: 1px; padding-right: 0; background: #35393d; }
.app.focus::after { left: 0; width: 46px; }
.mono { font: 700 12px "Open Sans", sans-serif; fill: #fff; }
.mono.w { font-size: 10px; }
.tiny { font: 5.500px "DejaVu Sans Mono", monospace; fill: #fff; }
.tray { flex: 1; display: flex; align-items: center; padding-left: 7px; font-size: 12px; }
.tray svg:nth-child(2) { margin-left: 10px; }
.tray svg:nth-child(3) { margin-left: 7px; }
.eng { margin-left: 9px; width: 23px; letter-spacing: -.4px; }
.clock { margin-left: 12px; width: 60px; display: flex; flex-direction: column; align-items: center; line-height: 18px; white-space: nowrap; letter-spacing: -.4px; }
.clock + svg { margin-left: 17px; }
.peek { width: 1px; height: 40px; margin-left: 19px; background: #555; }
</style>
